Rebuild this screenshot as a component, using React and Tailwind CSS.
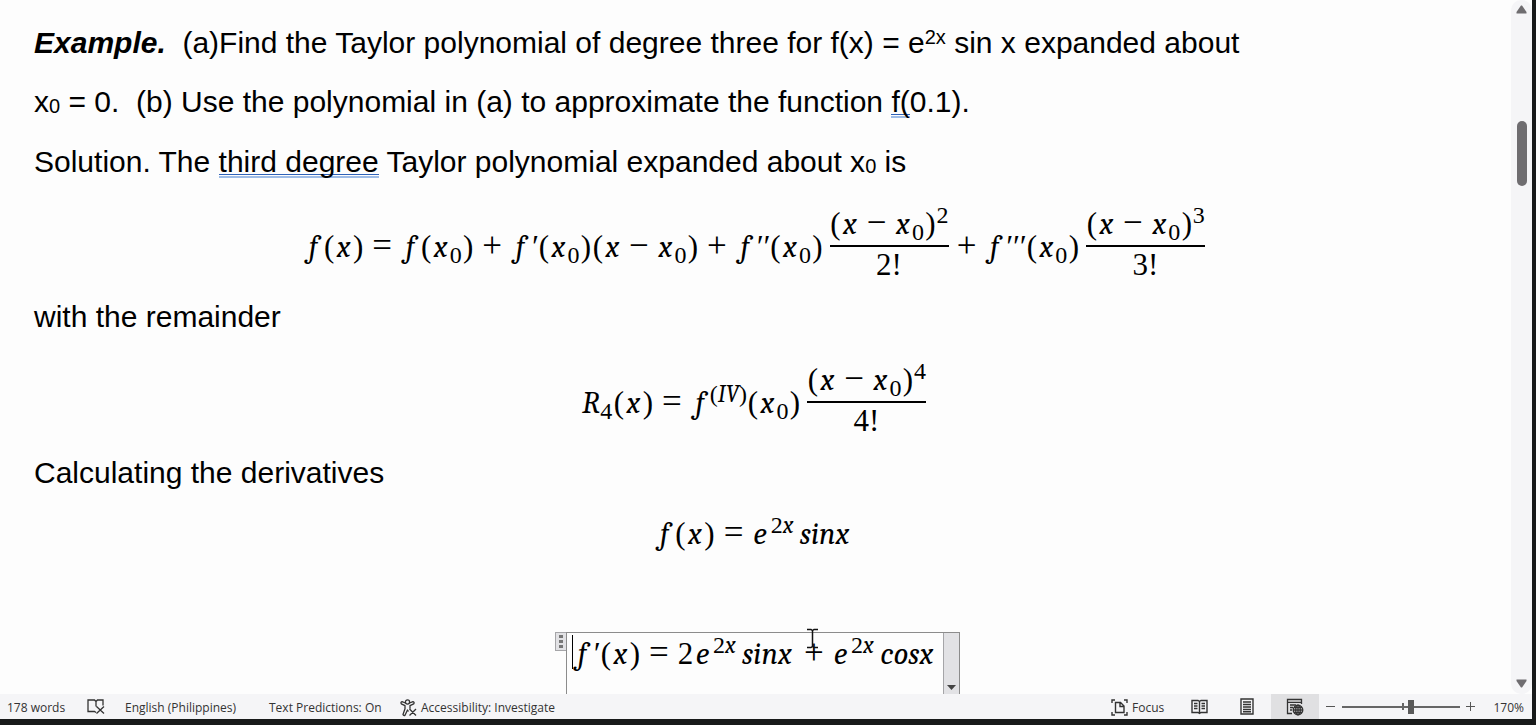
import React from "react";

const Letters = ({ children }) => (
  <i className="font-[Cambria,Caladea,'Liberation_Serif',serif]">{children}</i>
);
const Var = ({ children }) => (
  <span className="inline-block w-[17px] text-center">
    <Letters>{children}</Letters>
  </span>
);
const Open = () => <span className="inline-block w-3 text-center">(</span>;
const Close = () => <span className="inline-block w-3 text-center">)</span>;
const Op = ({ children }) => (
  <span className="mx-2 inline-block w-5 text-center text-[35px] leading-none">{children}</span>
);
const Fn = () => (
  <span className="inline-block w-5 text-center">
    <Letters>f</Letters>
  </span>
);
const Sub = ({ children }) => (
  <sub className="relative top-[6px] inline-block w-[13px] text-center align-baseline text-[24px] leading-none">{children}</sub>
);
const Sup = ({ children }) => (
  <sup className="relative -top-[11px] inline-block min-w-3 text-center align-baseline text-[24px] leading-none">{children}</sup>
);
const Primes = ({ count }) => <span className="mr-px inline-block text-left italic">{"′".repeat(count)}</span>;
const XZero = () => (
  <>
    <Var>x</Var>
    <Sub>0</Sub>
  </>
);
const AtZero = () => (
  <>
    <Open />
    <XZero />
    <Close />
  </>
);
const OfX = () => (
  <>
    <Open />
    <Var>x</Var>
    <Close />
  </>
);

function Fraction({ power }) {
  return (
    <span className="ml-1.5 flex flex-col items-center self-start">
      <span className="h-[43px] border-b-2 border-black leading-[40px]">
        <Open />
        <Var>x</Var>
        <Op>−</Op>
        <XZero />
        <Close />
        <Sup>{power}</Sup>
      </span>
      <span className="leading-9">{power}!</span>
    </span>
  );
}

function Equation({ tall, children }) {
  return (
    <div
      className={
        tall
          ? "flex h-24 justify-center pt-3 leading-[86px]"
          : "flex h-[60px] justify-center leading-[60px]"
      }
    >
      {children}
    </div>
  );
}

const Grammar = ({ children }) => (
  <span className="bg-[linear-gradient(#2f62b8_1px,transparent_1px,transparent_2px,#9dbbe6_2px)] bg-[size:100%_4px] bg-[position:0_100%] bg-no-repeat">
    {children}
  </span>
);
const TextSub = () => <sub className="relative top-px align-baseline text-[20px] leading-none">0</sub>;

function ETwoX() {
  return (
    <>
      <Var>e</Var>
      <sup className="relative -top-[11px] inline-block w-[27px] text-center align-baseline text-[24px] leading-none">
        2<Letters>x</Letters>
      </sup>
    </>
  );
}

function Document() {
  return (
    <main className="min-w-0 flex-1 overflow-hidden bg-[#fdfdfd] pt-[13px] pr-[37px] pl-[34px] text-[30px]">
      <p className="h-[59px] whitespace-pre leading-[59px]">
        <b className="italic">Example.</b>
        {"  (a)Find the Taylor polynomial of degree three for f(x) = e"}
        <sup className="relative -top-[9px] align-baseline text-[20px] leading-none">2x</sup>
        {" sin x expanded about"}
      </p>
      <p className="h-[60px] whitespace-pre leading-[59px]">
        x<TextSub />
        {" = 0.  (b) Use the polynomial in (a) to approximate the function "}
        <Grammar>f(</Grammar>0.1).
      </p>
      <p className="h-[60px] whitespace-pre leading-[59px]">
        Solution. The <Grammar>third degree</Grammar> Taylor polynomial expanded about x<TextSub /> is
      </p>
      <div className="font-['Liberation_Serif',serif] text-[31px]">
        <Equation tall>
          <span>
            <Fn /><OfX /><Op>=</Op><Fn /><AtZero /><Op>+</Op>
            <Fn /><Primes count={1} /><AtZero /><Open /><Var>x</Var><Op>−</Op><XZero /><Close /><Op>+</Op>
            <Fn /><Primes count={2} /><AtZero />
          </span>
          <Fraction power="2" />
          <span>
            <Op>+</Op><Fn /><Primes count={3} /><AtZero />
          </span>
          <Fraction power="3" />
        </Equation>
      </div>
      <p className="h-[60px] leading-[58px]">with the remainder</p>
      <div className="font-['Liberation_Serif',serif] text-[31px]">
        <Equation tall>
          <span>
            <Letters>R</Letters><Sub>4</Sub><OfX /><Op>=</Op><Fn />
            <Sup>(<Letters>IV</Letters>)</Sup>
            <AtZero />
          </span>
          <Fraction power="4" />
        </Equation>
      </div>
      <p className="h-[60px] leading-[58px]">Calculating the derivatives</p>
      <div className="font-['Liberation_Serif',serif] text-[31px]">
        <Equation>
          <span>
            <Fn /><OfX /><Op>=</Op><ETwoX />
            <span className="inline-block w-[58px] text-center"><Letters>sinx</Letters></span>
          </span>
        </Equation>
        <div className="mt-[68px] flex justify-center pl-[7px]">
          <div className="flex h-20 items-start">
            <button aria-label="Move equation" className="flex h-[19px] w-[11px] flex-col items-center justify-evenly border border-r-0 border-[#a5a5a8] bg-[#e2e2e5]">
              <span className="h-[3px] w-1 bg-[#777]" />
              <span className="h-[3px] w-1 bg-[#777]" />
              <span className="h-[3px] w-1 bg-[#777]" />
            </button>
            <div className="relative flex h-20 border border-[#8c8c8c]">
              <div className="px-[5px] leading-[42px]">
                <span className="absolute top-0.5 left-[5px] h-[34px] w-px bg-black" />
                <Fn /><Primes count={1} /><OfX /><Op>=</Op>
                <span className="inline-block w-[17px] text-center">2</span>
                <ETwoX />
                <span className="inline-block w-[58px] text-center"><Letters>sinx</Letters></span>
                <Op>+</Op>
                <ETwoX />
                <span className="inline-block w-[62px] text-center"><Letters>cosx</Letters></span>
              </div>
              <button aria-label="Equation options" className="flex w-4 justify-center border-l border-[#a5a5a8] bg-[#e2e2e5] pt-[52px]">
                <svg width="9" height="5" viewBox="0 0 9 5"><path d="M0 0h9L4.500 5z" fill="#444" /></svg>
              </button>
              <svg className="absolute -top-[5px] left-[239px]" width="13" height="21" viewBox="0 0 13 21" fill="none" stroke="#111" strokeWidth="1.500">
                <path d="M1 1.500h4l1.500 1 1.500-1h4M6.500 2v17M1 19.500h4l1.500-1 1.500 1h4" />
              </svg>
            </div>
          </div>
        </div>
      </div>
    </main>
  );
}

function ScrollBar() {
  return (
    <div className="flex w-[21px] flex-col items-center rounded-[10px] bg-[#f5f5f7]">
      <button aria-label="Scroll up" className="flex h-[18px] items-center">
        <svg width="11" height="9" viewBox="0 0 11 9"><path d="M5 .5h1L10.500 7v1.500H.5V7z" fill="#6f6d70" /></svg>
      </button>
      <div className="flex-1 pt-[103px]">
        <div className="h-[65px] w-2.5 rounded-full bg-[#6f6d70]" />
      </div>
      <button aria-label="Scroll down" className="flex h-[22px] items-center">
        <svg width="11" height="9" viewBox="0 0 11 9"><path d="M5 8.500h1L10.500 2V.5H.5V2z" fill="#6f6d70" /></svg>
      </button>
    </div>
  );
}

function StatusBar() {
  return (
    <footer className="flex h-[25px] items-center bg-[#f5f5f7] pr-2 pl-[7px] font-['Open_Sans','Noto_Sans',sans-serif] text-[12px] whitespace-nowrap text-[#333]">
      <button className="w-20 pt-0.5 text-left">178 words</button>
      <button aria-label="Proofing" className="w-[38px]">
        <svg width="18" height="17" viewBox="0 0 18 17" fill="none" stroke="#333" strokeWidth="1.300">
          <path d="M9 14.500 7.500 13.500H1V2h6.500L9 3.500 10.500 2H16v5.500M9 3.500V8.500M9.500 8.500l7.500 7M17 8.500l-7.500 7" />
        </svg>
      </button>
      <button className="w-36 pt-0.5 text-left">English (Philippines)</button>
      <button className="w-[131px] pt-0.5 text-left">Text Predictions: On</button>
      <button className="flex items-center gap-1 pt-0.5">
        <svg width="17" height="18" viewBox="0 0 17 18" fill="none" stroke="#333" strokeWidth="1.300" strokeLinejoin="round">
          <circle cx="7.500" cy="3" r="2.100" />
          <path d="M5.500 4 2 2.700Q.3 3 1.300 4.800L5 6.700v3L3 15.500q.5 1.500 2 .8L7.500 11l1 1.500M9.500 4l3.500-1.300q1.800.3.700 2.100L10 6.700v3M9.500 10l6.500 6.500M16 10l-6.500 6.500" />
        </svg>
        Accessibility: Investigate
      </button>
      <div className="flex-1" />
      <button className="mr-1 flex w-[60px] items-center gap-1 pt-0.5">
        <svg className="shrink-0" width="17" height="17" viewBox="0 0 17 17" fill="none" stroke="#333" strokeWidth="1.400">
          <path d="M1 4V1h3M13 1h3v3M1 13v3h3M13 16h3v-3M4.500 3.500h5l3.500 3.500v6.500H4.500zM9 3.500v4h4" />
        </svg>
        Focus
      </button>
      <button aria-label="Read mode" className="flex h-full w-12 items-center justify-center">
        <svg width="17" height="16" viewBox="0 0 17 16" fill="none" stroke="#333" strokeWidth="1.400">
          <path d="M8.500 2.500 7 1.500H1v12h6l1.500 1 1.500-1h6v-12h-6zM8.500 2.500v12M3 4.500h3.500M3 7h3.500M3 9.500h3.500M10.500 4.500H14M10.500 7H14M10.500 9.500H14" />
        </svg>
      </button>
      <button aria-label="Print layout" className="flex h-full w-12 items-center justify-center">
        <svg width="14" height="17" viewBox="0 0 14 17" fill="none" stroke="#333" strokeWidth="1.400">
          <path d="M1 1h12v15H1zM3 4h8M3 6.500h8M3 9h8M3 11.500h8M3 13.800h8" />
        </svg>
      </button>
      <button aria-label="Web layout" className="flex h-full w-12 items-center justify-center bg-[#e0e0e2]">
        <svg width="18" height="18" viewBox="0 0 18 18" fill="none" stroke="#333" strokeWidth="1.300">
          <path d="M6 15.500H1.500V1.500h14V6M1.500 4.300h14M4 7h6M4 9.500h3M4 12h2" />
          <circle cx="12" cy="12" r="4.800" />
          <path d="M7 12h10M12 7v10M8 9.500h8M8 14.500h8" />
          <ellipse cx="12" cy="12" rx="2.300" ry="4.800" />
        </svg>
      </button>
      <button aria-label="Zoom out" className="ml-0.5 flex w-[19px] justify-center">
        <svg width="9" height="9" viewBox="0 0 9 9"><path d="M0 4.500h9" stroke="#555" /></svg>
      </button>
      <input
        type="range"
        aria-label="Zoom"
        min="0"
        max="100"
        defaultValue="59"
        className="ml-0.5 h-[15px] w-[118px] appearance-none bg-[linear-gradient(#666,#666),linear-gradient(#666,#666)] bg-[size:100%_2px,2px_7px] bg-[position:0_50%,60px_50%] bg-no-repeat [&::-webkit-slider-thumb]:h-[14px] [&::-webkit-slider-thumb]:w-1.5 [&::-webkit-slider-thumb]:appearance-none [&::-webkit-slider-thumb]:bg-[#5a5a5a]"
      />
      <button aria-label="Zoom in" className="flex w-[21px] justify-center">
        <svg width="9" height="9" viewBox="0 0 9 9"><path d="M0 4.500h9M4.500 0v9" stroke="#555" /></svg>
      </button>
      <button className="ml-2.5 w-[33px] pt-0.5 text-right">170%</button>
    </footer>
  );
}

export default function App() {
  return (
    <div className="flex h-screen flex-col overflow-hidden bg-[#181a1a] pr-1 pb-1.5 font-['Liberation_Sans',Arial,sans-serif] text-black">
      <div className="flex min-h-0 flex-1 bg-[#fdfdfd]">
        <Document />
        <ScrollBar />
      </div>
      <StatusBar />
    </div>
  );
}
